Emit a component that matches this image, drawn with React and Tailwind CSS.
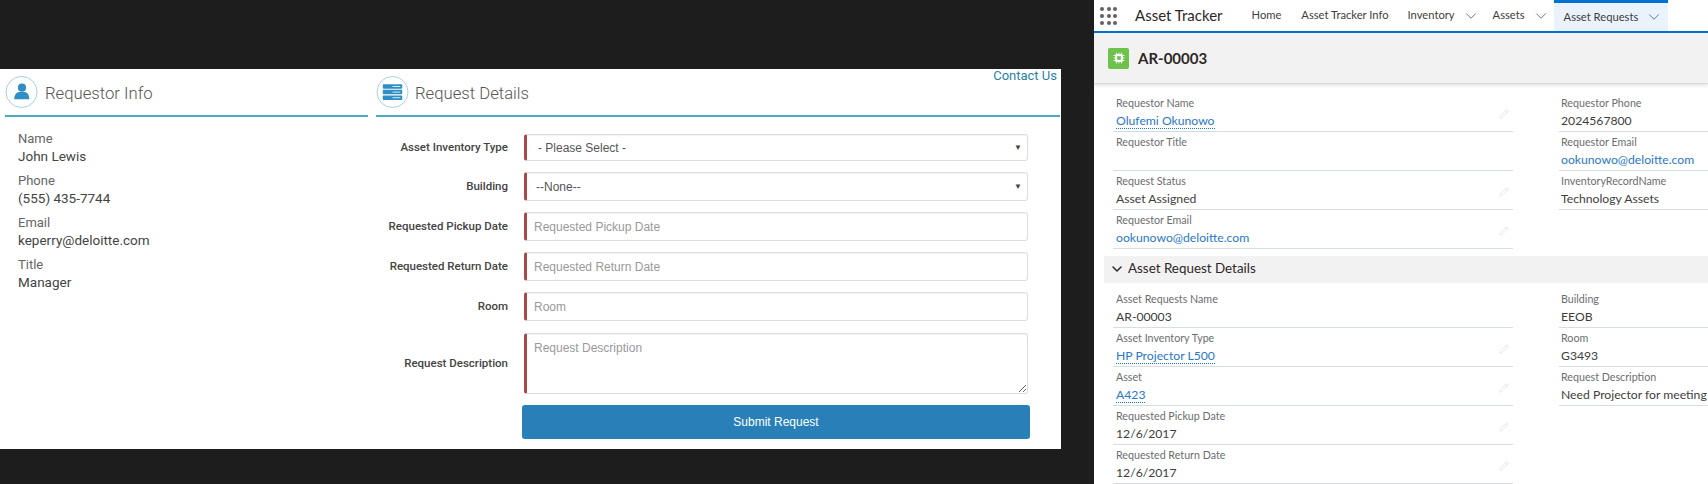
import React from 'react';
import { ChevronDown, Pencil } from 'lucide-react';

const PersonIcon = () => (
  <svg viewBox="0 0 34 34" className="w-[33px] h-[34px]">
    <circle cx="17" cy="17" r="16" fill="white" stroke="#8fc3d6" strokeWidth="0.8" />
    <circle cx="17.5" cy="12.5" r="4.2" fill="#2f8fc4" />
    <path d="M9.5 24.5 C9.5 19.5 12 17.5 14.5 17 L20.5 17 C23 17.5 25 19.5 25 24.5 Z" fill="#2f8fc4" />
  </svg>
);

const ServerIcon = () => (
  <svg viewBox="0 0 34 34" className="w-[33px] h-[34px]">
    <circle cx="17" cy="17" r="16" fill="white" stroke="#8fc3d6" strokeWidth="0.8" />
    <rect x="7" y="9" width="20" height="4.6" rx="0.8" fill="#2f8fc4" />
    <rect x="7" y="14.8" width="20" height="4.6" rx="0.8" fill="#2f8fc4" />
    <rect x="7" y="20.6" width="20" height="4.6" rx="0.8" fill="#2f8fc4" />
    <rect x="17" y="10.8" width="8" height="1" fill="#d4ebf5" />
    <rect x="17" y="16.6" width="8" height="1" fill="#d4ebf5" />
    <rect x="17" y="22.4" width="8" height="1" fill="#d4ebf5" />
  </svg>
);

const InfoItem = ({ label, value }) => (
  <div className="mb-[7px]">
    <div className="text-[13px] leading-[17px] text-[#666]">{label}</div>
    <div className="text-[13.5px] leading-[18px] text-[#444]">{value}</div>
  </div>
);

const FormRow = ({ label, className, children }) => (
  <div className={`flex items-center ${className}`}>
    <label className="w-[132px] shrink-0 whitespace-nowrap text-right text-[11.5px] font-medium text-[#444]">{label}</label>
    <div className="ml-[16px]">{children}</div>
  </div>
);

const fieldClass = 'w-[504px] rounded-[3px] border border-[#ddd] border-l-[3px] border-l-[#a94a4a] bg-white text-[12px] font-["Liberation_Sans",sans-serif] text-[#555] shadow-[inset_0_1px_1px_rgba(0,0,0,0.05)] placeholder:text-[#999] outline-none';

const SelectField = ({ text, pad, height }) => (
  <div className="relative">
    <select className={`${fieldClass} block appearance-none ${pad} ${height}`} defaultValue={text}>
      <option>{text}</option>
    </select>
    <span className="absolute right-[6px] top-1/2 -translate-y-1/2 text-[8px] text-[#444]">▼</span>
  </div>
);

const RecordField = ({ label, value, link, dotted, edit, inset = 'pl-[3px]' }) => (
  <div className={`relative h-[39px] border-b border-[#d8dde0] pt-[3px] ${inset}`}>
    <div className="text-[10.7px] leading-[14px] text-[#6b6d70]">{label}</div>
    <div className={`mt-[2px] text-[12.2px] leading-[17px] whitespace-nowrap ${link ? 'text-[#2a78c8]' : 'text-[#3e3e3c]'}`}>
      <span className={dotted ? 'border-b border-dotted border-[#2a78c8]' : ''}>{value}</span>
    </div>
    {edit && <Pencil size={10} strokeWidth={1.5} className="absolute right-[4px] top-[16px] text-[#dcdcdc]" />}
  </div>
);

const NavItem = ({ label, chevron }) => (
  <div className="flex items-center gap-[11px] whitespace-nowrap text-[11.2px] text-[#3e3e3c]">
    <span>{label}</span>
    {chevron && <ChevronDown size={18} strokeWidth={1.2} className="-mx-[4px] text-[#54698d]" />}
  </div>
);

export default function App() {
  return (
    <div className="flex h-[484px] w-[1708px] overflow-hidden bg-[#1d1d1d]">
      {/* left: request form */}
      <div className="mt-[69px] h-[380px] w-[1061px] shrink-0 bg-white font-['Roboto',sans-serif]">
        <div className="flex pt-[6px]">
          <section className="ml-[5px] w-[363px]">
            <div className="flex h-[42px] items-start gap-[7px] border-b-2 border-[#4aa8c8]">
              <PersonIcon />
              <h2 className="mt-[6px] text-[16.7px] font-light text-[#555]">Requestor Info</h2>
            </div>
            <div className="mt-[13px] pl-[13px]">
              <InfoItem label="Name" value="John Lewis" />
              <InfoItem label="Phone" value="(555) 435-7744" />
              <InfoItem label="Email" value="keperry@deloitte.com" />
              <InfoItem label="Title" value="Manager" />
            </div>
          </section>
          <section className="relative ml-[8px] w-[684px]">
            <a className="absolute right-[3px] top-[-9px] text-[13px] text-[#2a7fa8]">Contact Us</a>
            <div className="flex h-[42px] items-start gap-[6px] border-b-2 border-[#4aa8c8]">
              <ServerIcon />
              <h2 className="mt-[6px] text-[16.7px] font-light text-[#555]">Request Details</h2>
            </div>
            <div className="mt-[17px]">
              <FormRow label="Asset Inventory Type">
                <SelectField text="- Please Select -" pad="pl-[11px]" height="h-[27px]" />
              </FormRow>
              <FormRow label="Building" className="mt-[11px]">
                <SelectField text="--None--" pad="pl-[9px]" height="h-[29px]" />
              </FormRow>
              <FormRow label="Requested Pickup Date" className="mt-[11px]">
                <input placeholder="Requested Pickup Date" readOnly className={`${fieldClass} block h-[29px] pl-[7px]`} />
              </FormRow>
              <FormRow label="Requested Return Date" className="mt-[11px]">
                <input placeholder="Requested Return Date" readOnly className={`${fieldClass} block h-[29px] pl-[7px]`} />
              </FormRow>
              <FormRow label="Room" className="mt-[11px]">
                <input placeholder="Room" readOnly className={`${fieldClass} block h-[29px] pl-[7px]`} />
              </FormRow>
              <FormRow label="Request Description" className="mt-[12px]">
                <textarea placeholder="Request Description" readOnly className={`${fieldClass} block h-[61px] pl-[7px] pt-[5px]`} />
              </FormRow>
              <button className="ml-[146px] mt-[11px] block h-[34px] w-[508px] rounded-[3px] bg-[#2980b9] font-['Liberation_Sans',sans-serif] text-[12px] text-white">
                Submit Request
              </button>
            </div>
          </section>
        </div>
      </div>

      {/* right: record page */}
      <div className="ml-[33px] flex h-[484px] w-[614px] shrink-0 flex-col bg-white font-['Lato',sans-serif]">
        <nav className="flex h-[33px] shrink-0 items-center border-b-2 border-[#0070d2] pl-[6px]">
          <div className="grid w-[17px] shrink-0 grid-cols-3 gap-[3px]">
            {Array.from({ length: 9 }).map((_, i) => (
              <span key={i} className="h-[4px] w-[4px] rounded-full bg-[#5f6164]" />
            ))}
          </div>
          <span className="ml-[18px] whitespace-nowrap text-[15px] text-[#2b2826]">Asset Tracker</span>
          <div className="ml-[29px] flex h-full items-center">
            <NavItem label="Home" />
            <div className="ml-[20px]"><NavItem label="Asset Tracker Info" /></div>
            <div className="ml-[19px]"><NavItem label="Inventory" chevron /></div>
            <div className="ml-[17px]"><NavItem label="Assets" chevron /></div>
            <div className="ml-[8px] flex h-full w-[114px] shrink-0 items-center gap-[11px] border-t-[3px] border-[#0070d2] bg-[#eaf3fb] pl-[10px] text-[11.2px] text-[#3e3e3c]">
              <span className="whitespace-nowrap">Asset Requests</span>
              <ChevronDown size={18} strokeWidth={1.2} className="-mx-[4px] shrink-0 text-[#54698d]" />
            </div>
          </div>
        </nav>
        <header className="flex h-[51px] shrink-0 items-center gap-[9px] border-b border-[#dddbda] bg-[#f3f2f2] pl-[14px] shadow-[0_2px_3px_rgba(0,0,0,0.1)]">
          <div className="flex h-[21px] w-[21px] items-center justify-center rounded-[2px] bg-[#6cc24a]">
            <svg viewBox="0 0 12 12" className="h-[12px] w-[12px]">
              <rect x="2" y="2" width="8" height="8" rx="1.5" fill="white" />
              <rect x="4.2" y="4.2" width="3.6" height="3.6" fill="#6cc24a" />
              <path d="M3.5 0.5v1.5M6 0.5v1.5M8.5 0.5v1.5M3.5 10v1.5M6 10v1.5M8.5 10v1.5M0.5 3.5h1.5M0.5 6h1.5M0.5 8.5h1.5M10 3.5h1.5M10 6h1.5M10 8.5h1.5" stroke="white" strokeWidth="0.8" />
            </svg>
          </div>
          <h1 className="text-[15px] font-bold text-[#2b2826]">AR-00003</h1>
        </header>

        <div className="mt-[9px] flex shrink-0">
          <div className="ml-[19px] w-[400px]">
            <RecordField label="Requestor Name" value="Olufemi Okunowo" link dotted edit />
            <RecordField label="Requestor Title" value="" />
            <RecordField label="Request Status" value="Asset Assigned" edit />
            <RecordField label="Requestor Email" value="ookunowo@deloitte.com" link edit />
          </div>
          <div className="ml-[46px] w-[149px]">
            <RecordField inset="pl-[2px]" label="Requestor Phone" value="2024567800" />
            <RecordField inset="pl-[2px]" label="Requestor Email" value="ookunowo@deloitte.com" link />
            <RecordField inset="pl-[2px]" label="InventoryRecordName" value="Technology Assets" />
          </div>
        </div>

        <div className="ml-[10px] mt-[7px] flex h-[27px] shrink-0 items-center gap-[3px] bg-[#f3f2f2] pb-[2px] pl-[5px] text-[13.4px] text-[#2b2826]">
          <ChevronDown size={16} strokeWidth={2.2} />
          <span>Asset Request Details</span>
        </div>

        <div className="mt-[6px] flex shrink-0">
          <div className="ml-[19px] w-[400px]">
            <RecordField label="Asset Requests Name" value="AR-00003" />
            <RecordField label="Asset Inventory Type" value="HP Projector L500" link dotted edit />
            <RecordField label="Asset" value="A423" link dotted edit />
            <RecordField label="Requested Pickup Date" value="12/6/2017" edit />
            <RecordField label="Requested Return Date" value="12/6/2017" edit />
          </div>
          <div className="ml-[46px] w-[149px]">
            <RecordField inset="pl-[2px]" label="Building" value="EEOB" />
            <RecordField inset="pl-[2px]" label="Room" value="G3493" />
            <RecordField inset="pl-[2px]" label="Request Description" value="Need Projector for meeting" />
          </div>
        </div>
      </div>
    </div>
  );
}
